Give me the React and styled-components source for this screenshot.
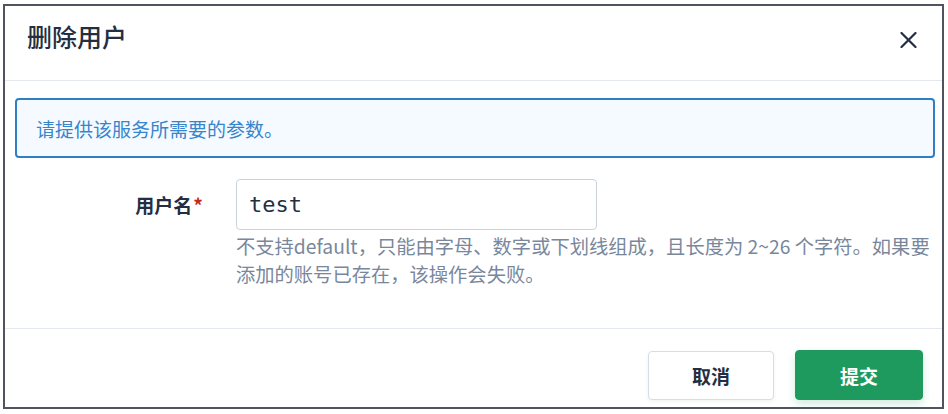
import React from "react";
import styled, { createGlobalStyle } from "styled-components";

const GlobalStyle = createGlobalStyle`
  body {
    margin: 0;
    background: #ffffff;
    font-family: "Noto Sans CJK SC", "Noto Sans", sans-serif;
    color: #242e42;
  }
`;

const Frame = styled.div`
  margin: 4px 4px 0 3px;
  height: 405px;
  box-sizing: border-box;
  border: 2px solid #50545e;
  background: #ffffff;
  display: flex;
  flex-direction: column;
`;

const Header = styled.div`
  height: 75px;
  box-sizing: border-box;
  border-bottom: 1px solid #e3e9ef;
  display: flex;
  justify-content: space-between;
  align-items: flex-start;
  padding: 0 25px 0 22px;
`;

const Title = styled.h2`
  margin: 12px 0 0;
  font-size: 25px;
  line-height: 37px;
  font-weight: 500;
  color: #242e42;
`;

const CloseButton = styled.button`
  margin-top: 26px;
  width: 17px;
  height: 16px;
  padding: 0;
  border: none;
  background: none;
  cursor: pointer;
  display: flex;
`;

const Content = styled.div`
  flex: 1;
  padding: 17px 7px 0 10px;
`;

const Alert = styled.div`
  height: 60px;
  box-sizing: border-box;
  border: 2px solid #2f7fc2;
  border-radius: 4px;
  background: #f4faff;
  padding: 0 19px;
  display: flex;
  align-items: center;
  font-size: 19px;
  color: #3785cb;
`;

const Field = styled.div`
  margin-top: 21px;
  display: grid;
  grid-template-columns: 188px 1fr;
  column-gap: 33px;
`;

const Label = styled.label`
  align-self: center;
  text-align: right;
  font-size: 19px;
  font-weight: 700;
  color: #242e42;
`;

const Required = styled.span`
  color: #ca2621;
  margin-left: 1px;
`;

const Input = styled.input`
  width: 361px;
  height: 51px;
  box-sizing: border-box;
  border: 1px solid #ccd3db;
  border-radius: 4px;
  padding: 0 12px;
  font-family: "DejaVu Sans Mono", "Liberation Mono", monospace;
  font-size: 22px;
  color: #242e42;
  outline: none;
`;

const Help = styled.p`
  grid-column: 2;
  margin: 2px 0 0;
  font-size: 19.3px;
  line-height: 28px;
  color: #79879c;
`;

const Footer = styled.div`
  height: 79px;
  box-sizing: border-box;
  border-top: 1px solid #e3e9ef;
  padding: 21px 19px 0;
  display: flex;
  justify-content: flex-end;
  align-items: flex-start;
  gap: 21px;
`;

const Button = styled.button`
  width: ${(p) => (p.$primary ? 128 : 126)}px;
  height: ${(p) => (p.$primary ? 50 : 49)}px;
  margin-top: ${(p) => (p.$primary ? 0 : 1)}px;
  box-sizing: border-box;
  border-radius: 4px;
  border: 1px solid ${(p) => (p.$primary ? "#1e9a5f" : "#d6dde4")};
  background: ${(p) => (p.$primary ? "#1e9a5f" : "#ffffff")};
  color: ${(p) => (p.$primary ? "#ffffff" : "#242e42")};
  box-shadow: ${(p) =>
    p.$primary ? "0 4px 8px rgba(30, 154, 95, 0.2)" : "0 2px 4px rgba(36, 46, 66, 0.06)"};
  font-family: "Noto Sans CJK SC", sans-serif;
  font-size: 19px;
  font-weight: 700;
  cursor: pointer;
`;

function CloseIcon() {
  return (
    <svg width="17" height="16" viewBox="0 0 17 16">
      <path d="M1.5 1 L15.5 15 M15.5 1 L1.5 15" stroke="#242e42" strokeWidth="2.2" strokeLinecap="round" />
    </svg>
  );
}

export default function App() {
  return (
    <>
      <GlobalStyle />
      <Frame>
        <Header>
          <Title>删除用户</Title>
          <CloseButton aria-label="关闭">
            <CloseIcon />
          </CloseButton>
        </Header>
        <Content>
          <Alert>请提供该服务所需要的参数。</Alert>
          <Field>
            <Label>
              用户名<Required>*</Required>
            </Label>
            <Input defaultValue="test" />
            <Help>
              不支持default，只能由字母、数字或下划线组成，且长度为 2~26 个字符。如果要添加的账号已存在，该操作会失败。
            </Help>
          </Field>
        </Content>
        <Footer>
          <Button>取消</Button>
          <Button $primary>提交</Button>
        </Footer>
      </Frame>
    </>
  );
}
